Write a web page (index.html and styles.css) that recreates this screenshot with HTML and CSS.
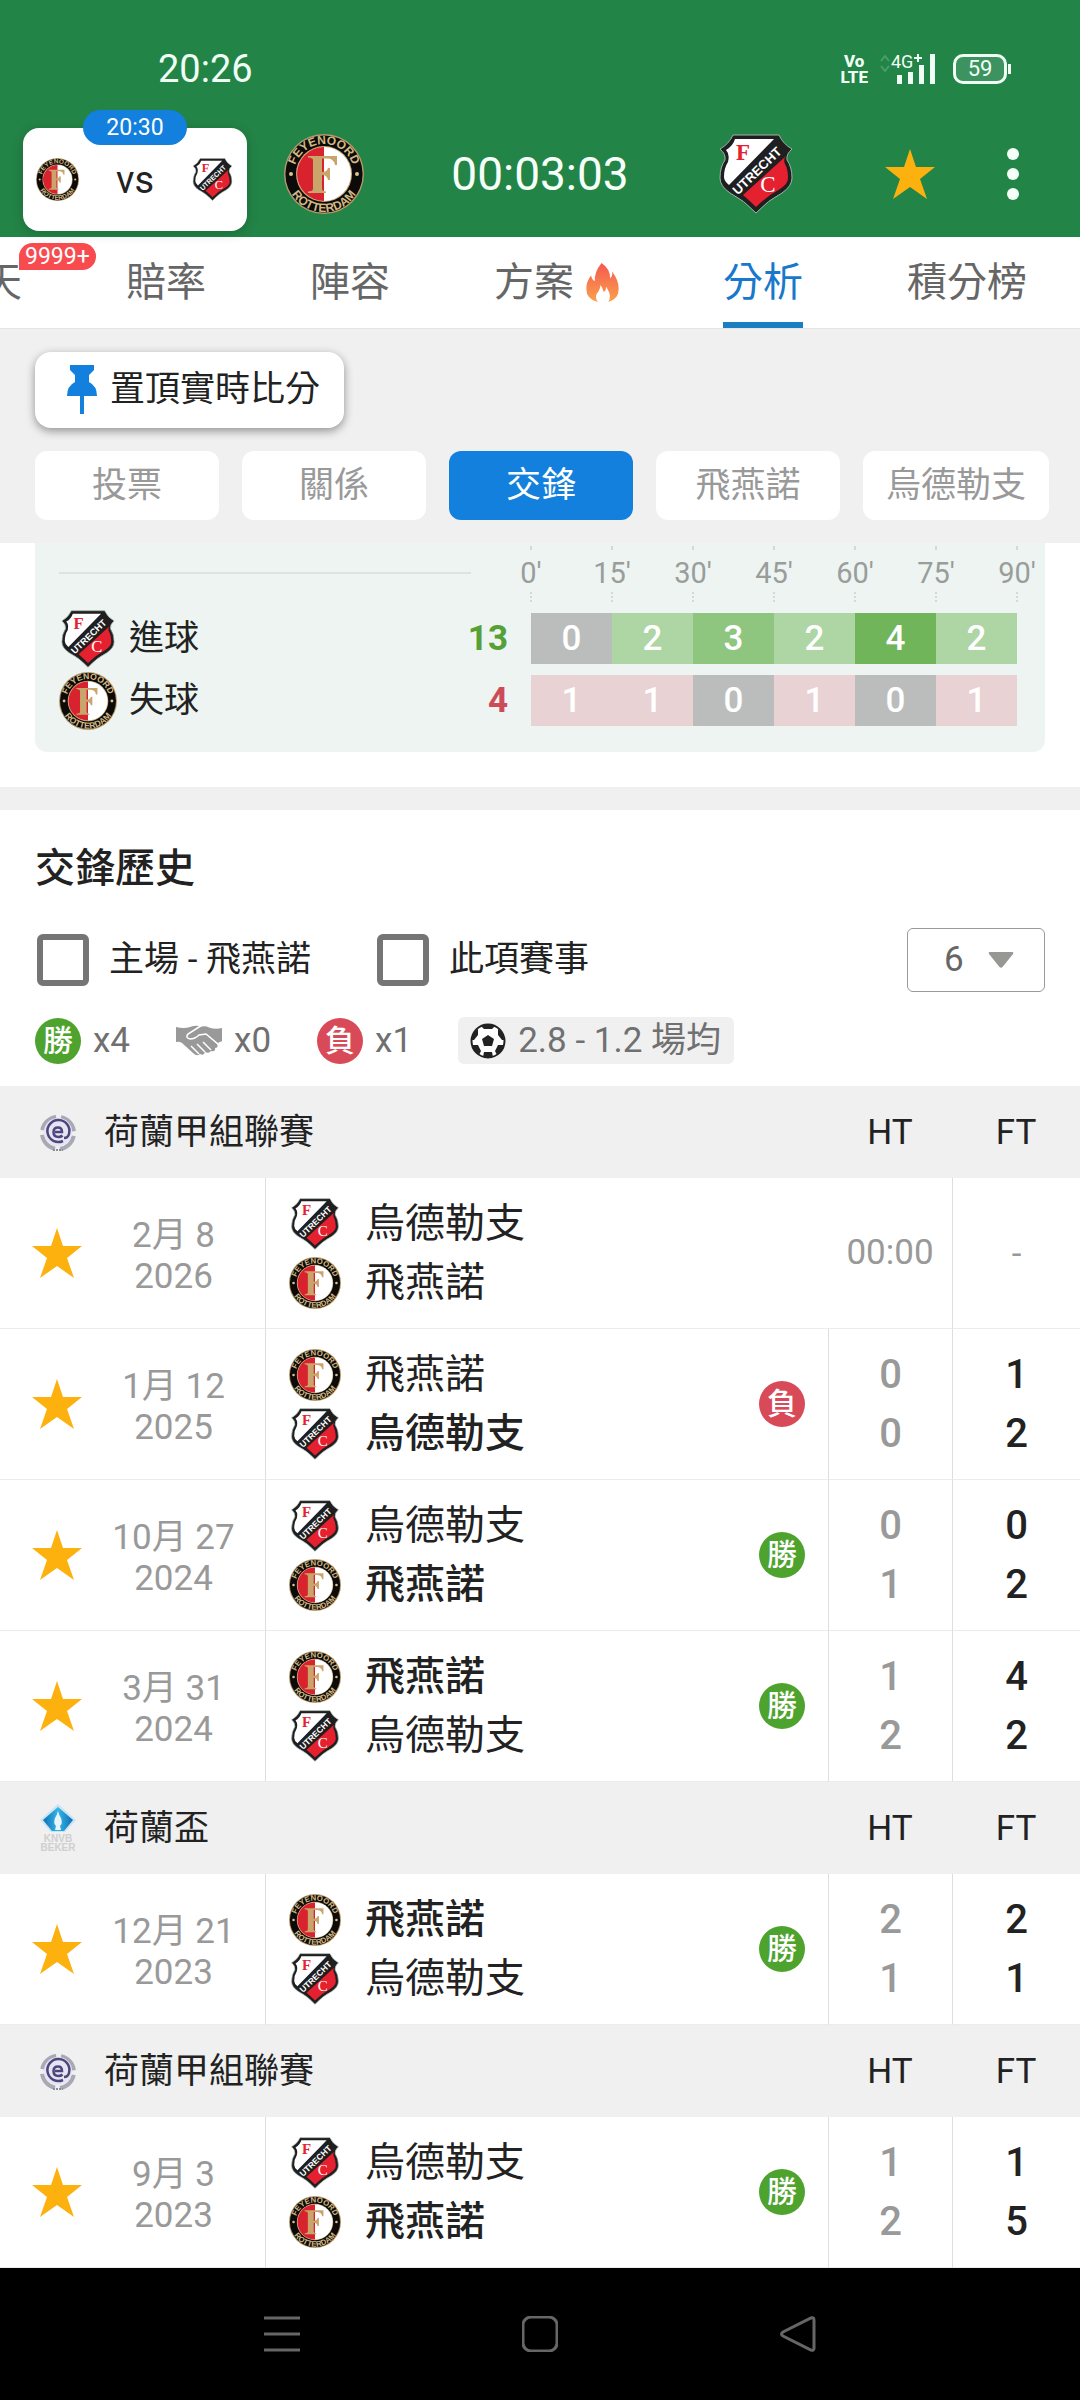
FILE: index.html
```html
<!DOCTYPE html>
<html lang="zh-Hant">
<head>
  <meta charset="UTF-8" />
  <meta name="viewport" content="width=device-width, initial-scale=1" />
  <title>飛燕諾 vs 烏德勒支 - 分析</title>
  <link rel="stylesheet" href="styles.css">
</head>
<body>

  <!-- Shared icons -->
  <svg class="svg-defs" aria-hidden="true">
    <defs>
      <path id="arc-top" d="M10 40 A30 30 0 0 1 70 40" />
      <path id="arc-bottom" d="M2 40 A38 38 0 0 0 78 40" />
      <linearGradient id="flame-fill" x1="0" y1="0" x2="0" y2="1">
        <stop offset="0" stop-color="#f4584f" />
        <stop offset="1" stop-color="#fba14e" />
      </linearGradient>
      <linearGradient id="cup-fill" x1="0" y1="0" x2="1" y2="0">
        <stop offset="0" stop-color="#0d6fb5" />
        <stop offset="0.5" stop-color="#35b5e8" />
        <stop offset="1" stop-color="#0d6fb5" />
      </linearGradient>
    </defs>

    <symbol id="feyenoord" viewBox="0 0 80 80">
      <circle cx="40" cy="40" r="40" fill="#b59a69" />
      <circle cx="40" cy="40" r="38.6" fill="#0d0b0a" />
      <circle cx="40" cy="40" r="28" fill="#c5a873" />
      <circle cx="40" cy="40" r="27" fill="#fff" />
      <path d="M40 13 A27 27 0 0 0 40 67 Z" fill="#d8232e" />
      <path d="M24 22 H53 V31 H51 Q50 25 44 24.500 H38 V38 Q43 38 44 34 H46 V46 H44 Q43 41 38 41 V55 Q38 57 42 57.500 V59 H24 V57.500 Q29 57 29 55 V26 Q29 24 24 23.500 Z" fill="#c9a56c" />
      <circle cx="7" cy="40" r="2" fill="#d9c394" />
      <circle cx="73" cy="40" r="2" fill="#d9c394" />
      <text class="ring-text"><textPath href="#arc-top" startOffset="50%">FEYENOORD</textPath></text>
      <text class="ring-text"><textPath href="#arc-bottom" startOffset="50%">ROTTERDAM</textPath></text>
    </symbol>

    <symbol id="utrecht" viewBox="0 0 80 80">
      <path d="M17 1 H63 Q67 10 76 15 Q70 20 71 26 Q76 33 76 44 Q76 52 66 59 Q52 66 40 79 Q28 66 14 59 Q4 52 4 44 Q4 33 9 26 Q10 20 4 15 Q13 10 17 1 Z" fill="#1f1e20" stroke="#9fb3a4" />
      <path d="M19 5 H58 L13 51 Q8 47 8 43 Q8 34 12 28 Q14 20 10 16 Q17 12 19 5 Z" fill="#fff" />
      <path d="M70 22 Q67 25 69 30 Q72 35 72 44 Q72 50 64 55 Q51 62 40 73 Q34 67 27 61 Z" fill="#e5202f" />
      <text class="shield-f" x="27" y="26">F</text>
      <text class="shield-c" x="52" y="58">C</text>
      <text class="shield-band" transform="translate(44 40) rotate(-44)">UTRECHT</text>
    </symbol>

    <symbol id="star" viewBox="0 0 50 50">
      <path d="M25 0 L31 18 H50 L35 30 L42 50 L25 38 L8 50 L15 30 L0 18 H19 Z" fill="#fdb10f" />
    </symbol>

    <symbol id="eredivisie" viewBox="0 0 36 36">
      <circle cx="18" cy="18" r="16" fill="none" stroke="#a9a9b6" stroke-width="4" stroke-dasharray="20 5" stroke-dashoffset="-3" />
      <circle cx="18" cy="17" r="14" fill="#e6e4f0" />
      <path d="M15 17 H22 Q22 12.500 18 12.500 Q13.500 12.500 13.500 17 Q13.500 22 18.500 22 Q21 22 22.500 20.500" fill="none" stroke="#4c467f" stroke-width="2.500" />
      <path d="M23 26 A11 11 0 1 1 29 19 Q28 23 24 23" fill="none" stroke="#4c467f" stroke-width="2.500" />
      <path d="M13 35 h10" stroke="#8c8c9c" stroke-width="2" stroke-dasharray="2 1" />
    </symbol>
  </svg>

  <!-- Phone status bar -->
  <div class="status-bar">
    <span class="clock">20:26</span>
    <div class="status-icons">
      <span class="volte">Vo<br>LTE</span>
      <svg class="signal" viewBox="0 0 56 32" aria-label="4G+">
        <path d="M1 8 l4 -5 l4 5 M1 13 l4 5 l4 -5" fill="none" stroke="#4b9d69" stroke-width="2" />
        <text x="11" y="15">4G</text>
        <path d="M34 5 h8 M38 1 v8" stroke="#f0fff5" stroke-width="2" />
        <path d="M19.500 22 v9 M30.500 19 v12 M41.500 12 v19 M52.500 1 v30" stroke="#f0fff5" stroke-width="5" />
      </svg>
      <span class="battery">59</span>
    </div>
  </div>

  <!-- Match header -->
  <header class="match-header">
    <div class="mini-card">
      <span class="mini-time">20:30</span>
      <svg class="mini-logo"><use href="#feyenoord" /></svg>
      <span class="mini-vs">vs</span>
      <svg class="mini-logo"><use href="#utrecht" /></svg>
    </div>
    <div class="scoreboard">
      <svg class="team-logo"><use href="#feyenoord" /></svg>
      <span class="countdown">00:03:03</span>
      <svg class="team-logo"><use href="#utrecht" /></svg>
    </div>
    <button class="icon-btn fav-btn" aria-label="收藏"><svg class="star"><use href="#star" /></svg></button>
    <button class="icon-btn more-btn" aria-label="更多">
      <svg width="12" height="52" viewBox="0 0 12 52" fill="#f7fff9"><circle cx="6" cy="6" r="6" /><circle cx="6" cy="26" r="6" /><circle cx="6" cy="46" r="6" /></svg>
    </button>
  </header>

  <nav class="tabs">
    <a href="#chat">聊天<span class="badge">9999+</span></a>
    <a href="#odds">賠率</a>
    <a href="#lineup">陣容</a>
    <a href="#tips">方案<svg class="flame" viewBox="0 0 34 42"><path d="M16 0 Q25 6 25 16 Q28 14 27 9 Q34 18 34 27 Q34 38 23 41 Q26 36 24 31 Q22 27 21 25 Q20 31 18 30 Q17 26 15 23 Q14 29 11 32 Q9 36 12 41 Q0 38 0 27 Q0 19 5 13 Q6 18 9 19 Q8 10 16 0 Z" fill="url(#flame-fill)" /></svg></a>
    <a href="#analysis" class="active">分析</a>
    <a href="#standings">積分榜</a>
  </nav>

  <section class="filters">
    <button class="pin-btn">
      <svg width="32" height="50" viewBox="0 0 32 50" fill="#1280dc"><path d="M4 0 H28 V5 L23 10 V17 Q31 21 31 31 H1 Q1 21 9 17 V10 L4 5 Z" /><path d="M14 31 h4 v18 h-4 z" /></svg>
      置頂實時比分
    </button>
    <div class="chips">
      <button>投票</button>
      <button>關係</button>
      <button class="active">交鋒</button>
      <button>飛燕諾</button>
      <button>烏德勒支</button>
    </div>
  </section>

  <main>
    <!-- Goals by period -->
    <section class="goals">
      <div class="axis">
        <hr>
        <div class="ticks">
          <span>0'</span><span>15'</span><span>30'</span><span>45'</span><span>60'</span><span>75'</span><span>90'</span>
        </div>
      </div>
      <table class="goals-table">
        <colgroup><col><col class="col-total"><col class="col-bar" span="6"></colgroup>
        <tr>
          <th><div class="goal-name"><svg><use href="#utrecht" /></svg>進球</div></th>
          <td class="total green">13</td>
          <td class="g0">0</td><td class="g2">2</td><td class="g3">3</td><td class="g2">2</td><td class="g4">4</td><td class="g2">2</td>
        </tr>
        <tr>
          <th><div class="goal-name"><svg><use href="#feyenoord" /></svg>失球</div></th>
          <td class="total red">4</td>
          <td class="r1">1</td><td class="r1">1</td><td class="g0">0</td><td class="r1">1</td><td class="g0">0</td><td class="r1">1</td>
        </tr>
      </table>
    </section>

    <!-- Head to head -->
    <section class="history">
      <h2>交鋒歷史</h2>
      <div class="options">
        <label><input type="checkbox">主場 - 飛燕諾</label>
        <label><input type="checkbox">此項賽事</label>
        <div class="select-wrap">
          <select aria-label="場數"><option>6</option><option>10</option><option>20</option></select>
          <svg width="26" height="16" viewBox="0 0 26 16"><path d="M2 0 H24 Q26 0 25 2 L14.500 15 Q13 16.500 11.500 15 L1 2 Q0 0 2 0 Z" fill="#979793" /></svg>
        </div>
      </div>
      <div class="summary">
        <span class="tally"><i class="result win">勝</i>x4</span>
        <span class="tally">
          <svg width="46" height="31" viewBox="0 0 46 31">
            <path d="M0 2 Q8 4 14 2 Q19 0 23 1 L30 9 L41 19 Q43 23 39 23 Q40 27 35 26 Q33 29 29 27 Q28 31 24 29 Q21 32 17 28 L6 18 Q3 16 0 17 Z" fill="#999" />
            <path d="M15 21 l8 8 M21 19 l8 8 M27 17 l8 8" stroke="#fff" stroke-width="1.500" />
            <path d="M47 2 Q40 4 34 2 Q28 -1 23 2 L12 9 Q9 13 14 14 Q19 14 23 10 L30 9 L42 19 Q44 17 47 17 Z" fill="#999" stroke="#fff" stroke-width="1.500" />
          </svg>x0</span>
        <span class="tally"><i class="result lose">負</i>x1</span>
        <span class="average">
          <svg width="36" height="36" viewBox="0 0 36 36">
            <circle cx="18" cy="18" r="16.500" fill="#fff" stroke="#222" stroke-width="2" />
            <path d="M18 12 L24 16 L22 23 H14 L12 16 Z M11 3 Q18 0 25 3 L22 6 H14 Z M1 17 L4 9 L8 6 L8 12 L4 17 Z M35 17 L32 9 L28 6 L28 12 L32 17 Z M2 22 L8 22 L11 28 L9 32 Q4 28 2 22 Z M34 22 L28 22 L25 28 L27 32 Q32 28 34 22 Z M13 34 L14 29 H22 L23 34 Q18 36 13 34 Z" fill="#222" />
          </svg>2.8 - 1.2 場均</span>
      </div>
    </section>

    <table class="matches">
      <colgroup><col class="col-star"><col class="col-date"><col><col class="col-ht"><col class="col-ft"></colgroup>
      <tr class="league">
        <th colspan="3"><div class="league-name"><svg><use href="#eredivisie" /></svg>荷蘭甲組聯賽</div></th>
        <th>HT</th><th>FT</th>
      </tr>
      <tr>
        <td class="fav"><svg class="star"><use href="#star" /></svg></td>
        <td class="date">2月 8<br>2026</td>
        <td class="teams"><div class="fixture">
          <div class="names">
            <div><svg><use href="#utrecht" /></svg>烏德勒支</div>
            <div><svg><use href="#feyenoord" /></svg>飛燕諾</div>
          </div>
        </div></td>
        <td class="kickoff">00:00</td>
        <td class="ft pending">-</td>
      </tr>
      <tr>
        <td class="fav"><svg class="star"><use href="#star" /></svg></td>
        <td class="date">1月 12<br>2025</td>
        <td class="teams"><div class="fixture">
          <div class="names">
            <div><svg><use href="#feyenoord" /></svg>飛燕諾</div>
            <div class="winner"><svg><use href="#utrecht" /></svg>烏德勒支</div>
          </div>
          <i class="result lose">負</i>
        </div></td>
        <td class="ht">0<br>0</td>
        <td class="ft">1<br>2</td>
      </tr>
      <tr>
        <td class="fav"><svg class="star"><use href="#star" /></svg></td>
        <td class="date">10月 27<br>2024</td>
        <td class="teams"><div class="fixture">
          <div class="names">
            <div><svg><use href="#utrecht" /></svg>烏德勒支</div>
            <div class="winner"><svg><use href="#feyenoord" /></svg>飛燕諾</div>
          </div>
          <i class="result win">勝</i>
        </div></td>
        <td class="ht">0<br>1</td>
        <td class="ft">0<br>2</td>
      </tr>
      <tr>
        <td class="fav"><svg class="star"><use href="#star" /></svg></td>
        <td class="date">3月 31<br>2024</td>
        <td class="teams"><div class="fixture">
          <div class="names">
            <div class="winner"><svg><use href="#feyenoord" /></svg>飛燕諾</div>
            <div><svg><use href="#utrecht" /></svg>烏德勒支</div>
          </div>
          <i class="result win">勝</i>
        </div></td>
        <td class="ht">1<br>2</td>
        <td class="ft">4<br>2</td>
      </tr>
      <tr class="league">
        <th colspan="3"><div class="league-name">
          <svg viewBox="0 0 36 50" class="cup">
            <path d="M18 0 L36 16 L25 28 H11 L0 16 Z" fill="#c9e4f2" />
            <path d="M18 3 L33 16 L24 27 H12 L3 16 Z" fill="url(#cup-fill)" />
            <path d="M18 7 Q19 11 21 14 Q23 19 20 22 L21 26 H15 L16 22 Q13 19 15 14 Q17 11 18 7 Z" fill="#e8f6fb" />
            <text x="18" y="38">KNVB</text>
            <text x="18" y="47">BEKER</text>
          </svg>荷蘭盃</div></th>
        <th>HT</th><th>FT</th>
      </tr>
      <tr>
        <td class="fav"><svg class="star"><use href="#star" /></svg></td>
        <td class="date">12月 21<br>2023</td>
        <td class="teams"><div class="fixture">
          <div class="names">
            <div class="winner"><svg><use href="#feyenoord" /></svg>飛燕諾</div>
            <div><svg><use href="#utrecht" /></svg>烏德勒支</div>
          </div>
          <i class="result win">勝</i>
        </div></td>
        <td class="ht">2<br>1</td>
        <td class="ft">2<br>1</td>
      </tr>
      <tr class="league">
        <th colspan="3"><div class="league-name"><svg><use href="#eredivisie" /></svg>荷蘭甲組聯賽</div></th>
        <th>HT</th><th>FT</th>
      </tr>
      <tr>
        <td class="fav"><svg class="star"><use href="#star" /></svg></td>
        <td class="date">9月 3<br>2023</td>
        <td class="teams"><div class="fixture">
          <div class="names">
            <div><svg><use href="#utrecht" /></svg>烏德勒支</div>
            <div class="winner"><svg><use href="#feyenoord" /></svg>飛燕諾</div>
          </div>
          <i class="result win">勝</i>
        </div></td>
        <td class="ht">1<br>2</td>
        <td class="ft">1<br>5</td>
      </tr>
    </table>
  </main>

  <!-- System navigation -->
  <footer class="system-nav">
    <button class="icon-btn" aria-label="最近"><svg viewBox="0 0 36 36"><path d="M0 2 H36 M0 18 H36 M0 34 H36" /></svg></button>
    <button class="icon-btn" aria-label="主頁"><svg viewBox="0 0 36 36"><rect x="1" y="1" width="34" height="34" rx="8" /></svg></button>
    <button class="icon-btn" aria-label="返回"><svg viewBox="0 0 36 36"><path d="M31 2 Q34 1 34 4 V32 Q34 35 31 34 L3 20 Q0 18 3 16 Z" /></svg></button>
  </footer>

</body>
</html>
```

FILE: styles.css
```css
/* Global reset */
* {
  margin: 0;
  padding: 0;
  box-sizing: border-box;
}

body {
  font-family: Roboto, "Noto Sans CJK TC", sans-serif;
  font-size: 35px;
  line-height: 40px;
  color: #222;
  background: #fff;
}

svg {
  display: block;
  flex: none;
}

a {
  color: inherit;
  text-decoration: none;
}

button,
select {
  font: inherit;
  color: inherit;
  border: none;
  background: none;
}

.svg-defs {
  position: absolute;
  width: 0;
  height: 0;
}

.icon-btn {
  display: flex;
}

.star {
  width: 50px;
  height: 50px;
}

/* Text inside the club badges */
.ring-text {
  font: bold 12px "Liberation Sans", sans-serif;
  fill: #d3b984;
  text-anchor: middle;
}

.shield-f {
  font: bold 23px "Liberation Serif", serif;
  fill: #e5202f;
  text-anchor: middle;
}

.shield-c {
  font: 23px "Liberation Serif", serif;
  fill: #fff;
  text-anchor: middle;
}

.shield-band {
  font: bold 13px "Liberation Sans", sans-serif;
  fill: #fff;
  text-anchor: middle;
}

/* Status bar */
.status-bar {
  display: flex;
  justify-content: space-between;
  align-items: center;
  height: 110px;
  padding: 28px 73px 0 158px;
  background: #238447;
  color: #f0fff5;
}

.clock {
  font-size: 38px;
}

.status-icons {
  display: flex;
  align-items: center;
}

.volte {
  font-size: 17px;
  line-height: 16px;
  font-weight: 800;
  text-align: center;
  margin-right: 12px;
}

.signal {
  width: 56px;
  height: 32px;
  margin-right: 17px;
}

.signal text {
  font-size: 18px;
  fill: #f0fff5;
}

.battery {
  position: relative;
  width: 54px;
  height: 30px;
  border: 3px solid #f0fff5;
  border-radius: 10px;
  background: #3d9360;
  font-size: 22px;
  line-height: 24px;
  text-align: center;
}

.battery::after {
  content: "";
  position: absolute;
  right: -7px;
  top: 7px;
  width: 3px;
  height: 10px;
  background: #f0fff5;
}

/* Match header */
.match-header {
  display: flex;
  align-items: center;
  height: 127px;
  padding: 0 61px 0 23px;
  background: #238447;
}

.mini-card {
  position: relative;
  display: flex;
  justify-content: space-between;
  align-items: center;
  width: 224px;
  height: 103px;
  margin-top: 12px;
  padding: 0 13px;
  border-radius: 16px;
  background: #fff;
  box-shadow: 0 2px 12px rgba(0, 0, 0, 0.2);
}

.mini-time {
  position: absolute;
  top: -18px;
  left: 60px;
  width: 104px;
  height: 35px;
  border-radius: 18px;
  background: #1280dc;
  color: #fff;
  font-size: 23px;
  line-height: 35px;
  text-align: center;
}

.mini-logo {
  width: 43px;
  height: 43px;
}

.mini-vs {
  font-size: 38px;
}

.scoreboard {
  flex: 1;
  display: flex;
  justify-content: space-between;
  align-items: center;
  margin: 0 89px 0 37px;
}

.team-logo {
  width: 80px;
  height: 80px;
}

.countdown {
  font-size: 46px;
  color: #f7fff9;
}

.more-btn {
  margin-left: 72px;
}

/* Tabs, scrolled to the right end */
.tabs {
  display: flex;
  justify-content: flex-end;
  gap: 104px;
  height: 92px;
  padding-right: 53px;
  overflow: hidden;
  border-bottom: 1px solid #e4e4e4;
  color: #666;
  font-size: 40px;
  line-height: 92px;
  white-space: nowrap;
}

.tabs a {
  position: relative;
  display: flex;
  align-items: center;
  flex: none;
}

.tabs .active {
  color: #1878cc;
}

.tabs .active::after {
  content: "";
  position: absolute;
  left: 0;
  right: 0;
  bottom: 0;
  height: 6px;
  background: #1a7fc1;
}

.badge {
  position: absolute;
  top: 6px;
  left: 77px;
  height: 27px;
  padding: 0 6px;
  border-radius: 14px 14px 14px 0;
  background: #f84b50;
  color: #fff;
  font-size: 23px;
  line-height: 27px;
}

.flame {
  width: 33px;
  height: 40px;
  margin-left: 12px;
}

/* Filters */
.filters {
  padding: 23px 31px 23px 35px;
  background: #f0f0f0;
}

.pin-btn {
  display: flex;
  align-items: center;
  gap: 12px;
  height: 76px;
  padding: 0 24px 0 31px;
  border-radius: 16px;
  background: #fff;
  box-shadow: 0 3px 10px rgba(0, 0, 0, 0.4);
}

.chips {
  display: flex;
  gap: 23px;
  margin-top: 23px;
}

.chips button {
  flex: 1 0 auto;
  min-width: 184px;
  height: 69px;
  border-radius: 12px;
  background: #fff;
  color: #999;
}

.chips .active {
  background: #1280dc;
  color: #fff;
}

/* Goals by period */
.goals {
  margin: 0 35px 35px;
  padding: 0 28px 15px 24px;
  border-radius: 0 0 12px 12px;
  background: #edf4f1;
}

.axis {
  display: flex;
  justify-content: space-between;
  align-items: center;
  height: 59px;
}

.axis hr {
  width: 43%;
  border: none;
  border-top: 2px solid #dce3e0;
}

.ticks {
  display: flex;
  justify-content: space-between;
  width: 532px;
  margin-right: -23px;
  color: #999d9b;
  font-size: 29px;
}

.ticks span {
  position: relative;
  width: 46px;
  text-align: center;
}

.ticks span::before,
.ticks span::after {
  content: "";
  position: absolute;
  left: 22px;
  border-left: 2px dotted #d3d9d6;
}

.ticks span::before {
  top: -7px;
  height: 4px;
}

.ticks span::after {
  bottom: -9px;
  height: 10px;
}

.goals-table {
  width: 100%;
  table-layout: fixed;
  border-spacing: 0 11px;
}

.goals-table th {
  font-weight: 400;
}

.goals-table td {
  height: 51px;
  color: #fff;
  font-weight: 500;
  text-align: center;
}

.col-total {
  width: 80px;
}

.col-bar {
  width: 81px;
}

.goal-name {
  display: flex;
  align-items: center;
  gap: 12px;
}

.goal-name svg {
  width: 58px;
  height: 58px;
  margin: -4px 0;
}

.goals-table .total {
  padding-right: 23px;
  font-weight: 700;
  text-align: right;
}

.goals-table .green { color: #56a137; }
.goals-table .red { color: #cd4b59; }
.g0 { background: #bbbdbc; }
.g2 { background: #aed5a4; }
.g3 { background: #8fc67f; }
.g4 { background: #71b55b; }
.r1 { background: #e8d2d3; }

/* Head to head */
.history {
  padding: 36px 35px 22px;
  border-top: 23px solid #f0f0f0;
}

.history h2 {
  font-size: 40px;
  line-height: 46px;
  font-weight: 500;
}

.options {
  display: flex;
  align-items: center;
  margin-top: 36px;
}

.options label {
  display: flex;
  align-items: center;
  margin-right: 64px;
}

.options input {
  appearance: none;
  width: 52px;
  height: 52px;
  margin: 0 20px 0 2px;
  border: 6px solid #757575;
  border-radius: 6px;
}

.select-wrap {
  position: relative;
  margin-left: auto;
}

.select-wrap select {
  appearance: none;
  display: block;
  width: 138px;
  height: 64px;
  padding-left: 36px;
  border: 1px solid #999;
  border-radius: 6px;
  color: #666;
}

.select-wrap svg {
  position: absolute;
  top: 24px;
  right: 31px;
  pointer-events: none;
}

.summary {
  display: flex;
  align-items: center;
  margin-top: 25px;
  color: #707070;
}

.tally {
  display: flex;
  align-items: center;
  gap: 12px;
  min-width: 94px;
  margin-right: 46px;
}

.result {
  flex: none;
  width: 46px;
  height: 46px;
  border-radius: 50%;
  color: #fff;
  font-size: 30px;
  line-height: 46px;
  font-style: normal;
  font-weight: 500;
  text-align: center;
}

.win {
  background: #4ea32f;
}

.lose {
  background: #d94a59;
}

.average {
  display: flex;
  align-items: center;
  gap: 12px;
  height: 47px;
  padding: 0 13px 0 12px;
  border-radius: 6px;
  background: #f0f0f0;
}

/* Matches table */
.matches {
  width: 100%;
  table-layout: fixed;
  border-spacing: 0;
}

.col-star { width: 82px; }
.col-date { width: 184px; }
.col-ht { width: 124px; }
.col-ft { width: 128px; }

.league th {
  height: 92px;
  padding-top: 2px;
  background: #f0f0f0;
  font-weight: 400;
}

.league-name {
  display: flex;
  align-items: center;
  gap: 28px;
  padding-left: 40px;
}

.league-name svg {
  width: 36px;
  height: 36px;
}

.league-name .cup {
  height: 50px;
}

.cup text {
  font: bold 10px "Liberation Sans", sans-serif;
  fill: #cfcfcf;
  text-anchor: middle;
}

.matches td {
  height: 151px;
  border-bottom: 1px solid #ececec;
  text-align: center;
}

.fav {
  padding-left: 32px;
}

.matches .date {
  padding-top: 5px;
  border-right: 1px solid #dedede;
  color: #999;
  line-height: 41px;
}

.fixture {
  display: flex;
  justify-content: space-between;
  align-items: center;
  padding: 0 23px;
}

.names div {
  display: flex;
  align-items: center;
  gap: 24px;
  font-size: 40px;
  line-height: 59px;
}

.names svg {
  width: 52px;
  height: 52px;
}

.names .winner {
  font-weight: 500;
}

.kickoff {
  color: #999;
}

.matches .ht,
.matches .ft {
  border-left: 1px solid #dedede;
  font-size: 40px;
  line-height: 59px;
  font-weight: 500;
}

.matches .ht {
  color: #999;
}

.matches .pending {
  color: #999;
  font-size: 35px;
  font-weight: 400;
}

/* System navigation */
.system-nav {
  display: flex;
  justify-content: space-around;
  align-items: center;
  height: 132px;
  padding: 0 153px;
  background: #000;
}

.system-nav svg {
  width: 36px;
  height: 36px;
  fill: none;
  stroke: #666;
  stroke-width: 3;
}
```
